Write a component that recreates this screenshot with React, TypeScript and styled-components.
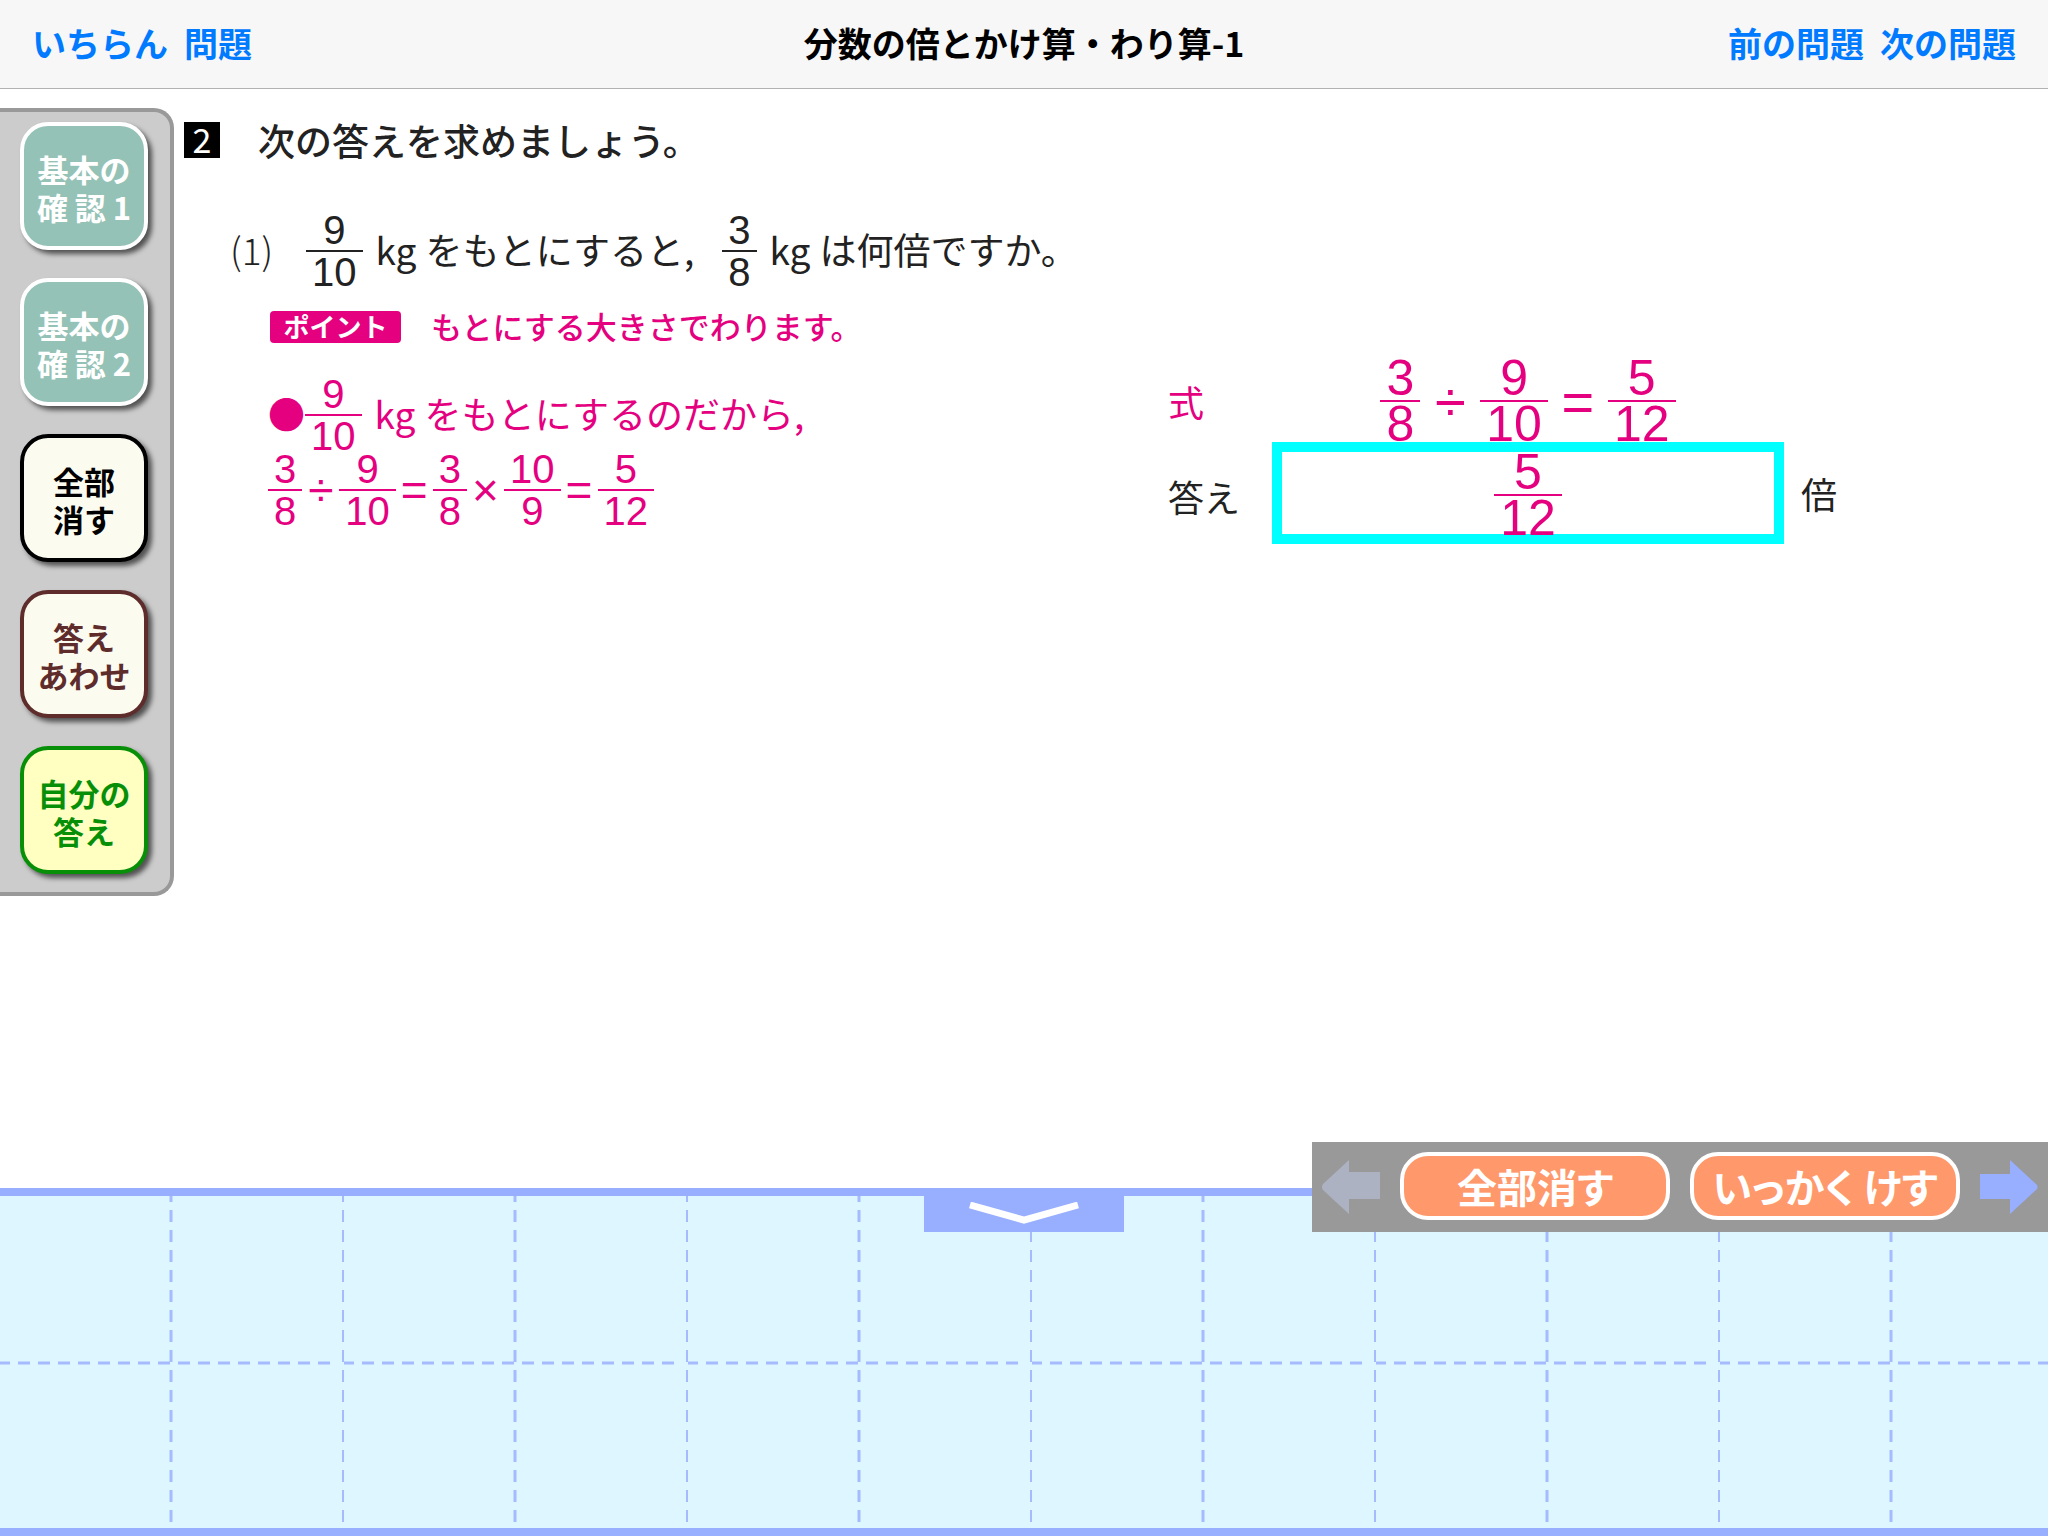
import React from 'react';
import styled, { createGlobalStyle } from 'styled-components';

const PINK = '#e4007f';
const PERIWINKLE = '#98aeff';
const DIGITS = "'Liberation Sans', 'Noto Sans CJK JP', sans-serif";

const GlobalStyle = createGlobalStyle`
  *, *::before, *::after { box-sizing: border-box; }
  body {
    margin: 0;
    background: #fff;
    color: #222;
    font-family: 'Noto Sans CJK JP', 'Liberation Sans', sans-serif;
  }
  button { font-family: inherit; cursor: pointer; }
  h1, p { margin: 0; font-weight: inherit; }
`;

const Page = styled.div`
  display: flex;
  flex-direction: column;
  min-height: 100vh;
  overflow-x: hidden;
`;

/* navigation bar */

const NavBar = styled.header`
  display: grid;
  grid-template-columns: 1fr auto 1fr;
  align-items: center;
  height: 89px;
  padding: 0 32px 2px;
  background: #f7f7f7;
  border-bottom: 1px solid #b2b2b2;
`;

const NavGroup = styled.nav<{ $end?: boolean }>`
  display: flex;
  gap: 16px;
  justify-content: ${(p) => (p.$end ? 'flex-end' : 'flex-start')};
`;

const NavButton = styled.button`
  padding: 0;
  border: 0;
  background: none;
  color: #007aff;
  font-size: 34px;
  font-weight: 700;
  line-height: 48px;
`;

const NavTitle = styled.h1`
  color: #000;
  font-size: 34px;
  font-weight: 700;
  line-height: 48px;
`;

/* side panel */

const Main = styled.main`
  display: flex;
  flex: 1;
  align-items: flex-start;
`;

const SidePanel = styled.aside`
  display: flex;
  flex: none;
  flex-direction: column;
  gap: 28px;
  margin-top: 19px;
  padding: 10px 22px 18px 20px;
  background: #ccc;
  border: 4px solid #999;
  border-left: 0;
  border-radius: 0 20px 20px 0;
`;

const SideButton = styled.button<{ $ink: string; $fill: string; $edge: string }>`
  display: flex;
  flex-direction: column;
  align-items: center;
  justify-content: center;
  width: 128px;
  height: 128px;
  padding: 4px 0 0;
  border: 4px solid ${(p) => p.$edge};
  border-radius: 28px;
  background: ${(p) => p.$fill};
  box-shadow: 4px 4px 5px rgba(0, 0, 0, 0.6);
  color: ${(p) => p.$ink};
  font-size: 31px;
  font-weight: 700;
  line-height: 38px;
`;

const SideLine = styled.span<{ $spread?: boolean }>`
  display: block;
  width: 94px;
  text-align: center;
  text-align-last: ${(p) => (p.$spread ? 'justify' : 'center')};
`;

/* worksheet */

const Sheet = styled.section`
  flex: 1;
  min-width: 0;
  padding: 27px 0 0 10px;
`;

const Heading = styled.div`
  display: flex;
  align-items: center;
  gap: 38px;
  height: 48px;
  font-size: 37px;
  font-weight: 500;
`;

const NumberBadge = styled.span`
  width: 36px;
  height: 36px;
  background: #000;
  color: #fff;
  font-size: 34px;
  font-weight: 400;
  line-height: 34px;
  text-align: center;
`;

const MathRow = styled.div<{ $ink?: string }>`
  display: flex;
  align-items: center;
  height: 75px;
  color: ${(p) => p.$ink ?? 'inherit'};
  font-size: 37px;
  line-height: 40px;
  white-space: nowrap;
`;

const Question = styled(MathRow)`
  margin: 49px 0 23px 46px;
`;

const Phrase = styled.span`
  padding-bottom: 4px;
`;

const QuestionNumber = styled(Phrase)`
  width: 76px;
  font-weight: 300;
`;

const Unit = styled(Phrase)`
  margin: 0 9px 0 13px;
`;

const Clause = styled(Phrase)`
  margin-right: 28px;
`;

const FractionBox = styled.span<{ $large?: boolean }>`
  display: inline-flex;
  flex-direction: column;
  align-items: stretch;
  font-family: ${DIGITS};
  font-size: ${(p) => (p.$large ? 50 : 40)}px;
  line-height: ${(p) => (p.$large ? 44 : 40)}px;
  text-align: center;
`;

const Numerator = styled.span`
  padding: 0 6px;
  border-bottom: 2px solid currentColor;
`;

const Denominator = styled.span`
  padding: 0 6px;
`;

const Operator = styled.span<{ $large?: boolean }>`
  width: ${(p) => (p.$large ? 60 : 37)}px;
  font-family: ${DIGITS};
  font-size: ${(p) => (p.$large ? 56 : 46)}px;
  text-align: center;
`;

const PointRow = styled.div`
  display: flex;
  align-items: center;
  gap: 30px;
  height: 32px;
  margin-left: 86px;
  color: ${PINK};
  font-size: 31px;
  font-weight: 500;
`;

const PointText = styled.p`
  padding-bottom: 4px;
`;

const PointTag = styled.span`
  width: 131px;
  height: 32px;
  border-radius: 4px;
  background: ${PINK};
  color: #fff;
  font-size: 26px;
  font-weight: 700;
  line-height: 30px;
  text-align: center;
`;

const WorkArea = styled.div`
  display: grid;
  grid-template-columns: minmax(0, 1fr) 880px;
  align-items: start;
`;

const Explanation = styled.div`
  margin: 34px 0 0 84px;
`;

const AnswerGrid = styled.div`
  display: grid;
  grid-template-columns: 104px 512px auto;
  align-items: center;
  margin-top: 17px;
  font-size: 36px;
`;

const Formula = styled.div`
  display: flex;
  align-items: center;
  justify-content: center;
  height: 82px;
  color: ${PINK};
`;

const FormulaLabel = styled.span`
  grid-column: 1;
  color: ${PINK};
`;

const AnswerLabel = styled.label`
  grid-column: 1;
  padding-top: 6px;
`;

const AnswerBox = styled.output`
  display: flex;
  align-items: center;
  justify-content: center;
  height: 102px;
  padding-top: 4px;
  border: 10px solid #0ff;
  color: ${PINK};
`;

const AnswerUnit = styled.span`
  padding-left: 17px;
`;

/* scratch pad */

const Pad = styled.section`
  position: relative;
  height: 348px;
  border: solid ${PERIWINKLE};
  border-width: 8px 0;
  background: #ddf6ff;
`;

const PadGrid = styled.svg`
  display: block;
  width: 100%;
  height: 100%;
`;

const PadTab = styled.button`
  position: absolute;
  top: 0;
  left: calc(50% - 100px);
  width: 200px;
  height: 36px;
  padding: 0;
  border: 0;
  background: ${PERIWINKLE};
  line-height: 0;
`;

const PadTools = styled.div`
  position: absolute;
  top: -54px;
  right: 0;
  display: flex;
  align-items: center;
  gap: 20px;
  height: 90px;
  padding: 0 10px;
  background: #999;
`;

const ArrowButton = styled.button`
  padding: 0;
  border: 0;
  background: none;
  line-height: 0;
`;

const ToolButton = styled.button`
  width: 270px;
  height: 68px;
  margin-bottom: 2px;
  padding: 0;
  border: 4px solid #fff;
  border-radius: 28px;
  background: #ff986b;
  color: #fff;
  font-size: 40px;
  font-weight: 700;
  font-feature-settings: 'palt';
  line-height: 56px;
  white-space: nowrap;
`;

function Fraction({ n, d, large }: { n: number; d: number; large?: boolean }) {
  return (
    <FractionBox $large={large}>
      <Numerator>{n}</Numerator>
      <Denominator>{d}</Denominator>
    </FractionBox>
  );
}

type SideItem = { lines: string[]; ink: string; fill: string; edge: string };

const SIDE_ITEMS: SideItem[] = [
  { lines: ['基本の', '確認1'], ink: '#fff', fill: '#95c2b6', edge: '#fff' },
  { lines: ['基本の', '確認2'], ink: '#fff', fill: '#95c2b6', edge: '#fff' },
  { lines: ['全部', '消す'], ink: '#000', fill: '#fbfbf0', edge: '#000' },
  { lines: ['答え', 'あわせ'], ink: '#5f2c2c', fill: '#fbfbf0', edge: '#5f2c2c' },
  { lines: ['自分の', '答え'], ink: '#079007', fill: '#ffffc2', edge: '#079007' },
];

export default function App() {
  return (
    <Page>
      <GlobalStyle />
      <NavBar>
        <NavGroup>
          <NavButton type="button">いちらん</NavButton>
          <NavButton type="button">問題</NavButton>
        </NavGroup>
        <NavTitle>分数の倍とかけ算・わり算-1</NavTitle>
        <NavGroup $end>
          <NavButton type="button">前の問題</NavButton>
          <NavButton type="button">次の問題</NavButton>
        </NavGroup>
      </NavBar>

      <Main>
        <SidePanel>
          {SIDE_ITEMS.map((item) => (
            <SideButton
              key={item.lines.join('')}
              type="button"
              $ink={item.ink}
              $fill={item.fill}
              $edge={item.edge}
            >
              {item.lines.map((line) => (
                <SideLine key={line} $spread={/\d$/.test(line)}>
                  {line}
                </SideLine>
              ))}
            </SideButton>
          ))}
        </SidePanel>

        <Sheet>
          <Heading>
            <NumberBadge>2</NumberBadge>
            <p>次の答えを求めましょう。</p>
          </Heading>

          <Question>
            <QuestionNumber>(1)</QuestionNumber>
            <Fraction n={9} d={10} />
            <Unit>kg</Unit>
            <Clause>をもとにすると,</Clause>
            <Fraction n={3} d={8} />
            <Unit>kg</Unit>
            <Phrase>は何倍ですか。</Phrase>
          </Question>

          <PointRow>
            <PointTag>ポイント</PointTag>
            <PointText>もとにする大きさでわります。</PointText>
          </PointRow>

          <WorkArea>
            <Explanation>
              <MathRow $ink={PINK}>
                <Phrase>●</Phrase>
                <Fraction n={9} d={10} />
                <Unit>kg</Unit>
                <Phrase>をもとにするのだから,</Phrase>
              </MathRow>
              <MathRow $ink={PINK}>
                <Fraction n={3} d={8} />
                <Operator>÷</Operator>
                <Fraction n={9} d={10} />
                <Operator>=</Operator>
                <Fraction n={3} d={8} />
                <Operator>×</Operator>
                <Fraction n={10} d={9} />
                <Operator>=</Operator>
                <Fraction n={5} d={12} />
              </MathRow>
            </Explanation>

            <AnswerGrid>
              <FormulaLabel>式</FormulaLabel>
              <Formula>
                <Fraction n={3} d={8} large />
                <Operator $large>÷</Operator>
                <Fraction n={9} d={10} large />
                <Operator $large>=</Operator>
                <Fraction n={5} d={12} large />
              </Formula>
              <AnswerLabel htmlFor="answer">答え</AnswerLabel>
              <AnswerBox id="answer">
                <Fraction n={5} d={12} large />
              </AnswerBox>
              <AnswerUnit>倍</AnswerUnit>
            </AnswerGrid>
          </WorkArea>
        </Sheet>
      </Main>

      <Pad>
        <PadGrid aria-hidden="true">
          <defs>
            <pattern id="cells" width="344" height="344" y="-6" patternUnits="userSpaceOnUse">
              <g stroke="#a6bbfd" strokeDasharray="12 8">
                <path d="M171 0V340" strokeWidth="3" />
                <path d="M343 0V340" strokeWidth="2" />
                <path d="M-2 173H336" strokeWidth="3" />
              </g>
            </pattern>
          </defs>
          <rect width="100%" height="100%" fill="url(#cells)" />
        </PadGrid>
        <PadTab type="button" aria-label="とじる">
          <svg width="110" height="24" viewBox="0 0 110 24" fill="none">
            <path d="M1 3L55 18L109 3" stroke="#fff" strokeWidth="7" />
          </svg>
        </PadTab>
        <PadTools>
          <ArrowButton type="button" aria-label="もどる">
            <svg width="58" height="54" viewBox="0 0 58 54" fill="#adb2c2">
              <path d="M27 0V12H58V39H27V54L1 30Q-1 27 1 24Z" />
            </svg>
          </ArrowButton>
          <ToolButton type="button">全部消す</ToolButton>
          <ToolButton type="button">いっかく けす</ToolButton>
          <ArrowButton type="button" aria-label="すすむ">
            <svg width="58" height="54" viewBox="0 0 58 54" fill={PERIWINKLE}>
              <path d="M30 0L57 25Q58 27 57 29L30 54V39H0V14H30Z" />
            </svg>
          </ArrowButton>
        </PadTools>
      </Pad>
    </Page>
  );
}
